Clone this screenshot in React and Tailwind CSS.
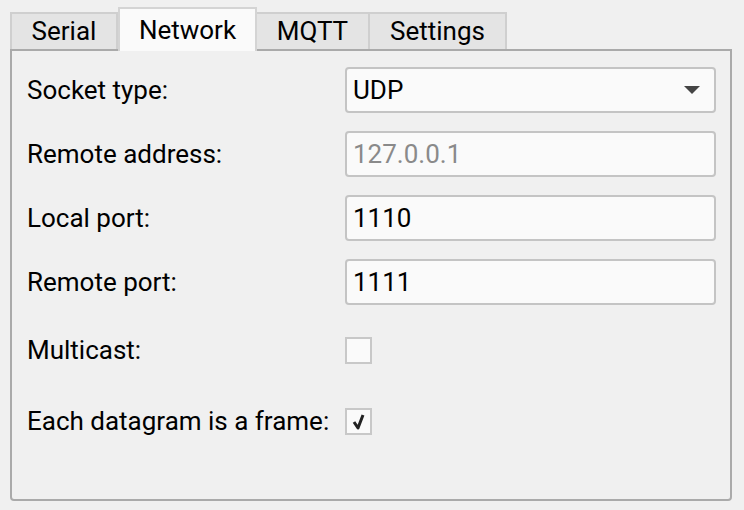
import React from 'react';

const tabs = ['Serial', 'Network', 'MQTT', 'Settings'];
const widths = ['w-[108px]', 'w-[139px]', 'w-[113px]', 'w-[137px]'];

function Field({ value, disabled }) {
  return (
    <div className={`h-[46px] w-[371px] rounded-[4px] border-2 border-[#c4c4c4] bg-[#fafafa] px-[6px] flex items-center text-[26px] ${disabled ? 'text-[#8a8a8a]' : 'text-black'}`}>
      {value}
    </div>
  );
}

function Check({ checked }) {
  return (
    <div className="w-[27px] h-[27px] border-2 border-[#c8c8c8] bg-[#fafafa] flex items-center justify-center">
      {checked && (
        <svg width="14" height="18" viewBox="0 0 14 18">
          <path d="M2 10 L6 16 L11 3" fill="none" stroke="#222" strokeWidth="3" strokeLinejoin="round" />
        </svg>
      )}
    </div>
  );
}

export default function App() {
  const rows = [
    { label: 'Socket type:', h: 'h-[64px]', el: (
      <div className="h-[46px] w-[371px] rounded-[4px] border-2 border-[#c4c4c4] bg-[#fafafa] px-[6px] flex items-center justify-between text-[26px] text-black">
        <span>UDP</span>
        <svg width="16" height="10" viewBox="0 0 16 10" className="mr-[8px]"><path d="M0 1 L16 1 L8 9 Z" fill="#444" /></svg>
      </div>
    ) },
    { label: 'Remote address:', h: 'h-[64px]', el: <Field value="127.0.0.1" disabled /> },
    { label: 'Local port:', h: 'h-[64px]', el: <Field value="1110" /> },
    { label: 'Remote port:', h: 'h-[64px]', el: <Field value="1111" /> },
    { label: 'Multicast:', h: 'h-[72px]', el: <Check /> },
    { label: 'Each datagram is a frame:', h: 'h-[70px]', el: <Check checked /> },
  ];

  return (
    <div className="w-[744px] h-[510px] bg-[#f0f0f0] pt-[7px] px-[10px]" style={{ fontFamily: 'Roboto, sans-serif' }}>
      <div className="flex items-end h-[42px]">
        {tabs.map((t, i) => (
          <div
            key={t}
            className={`${widths[i]} flex items-center justify-center text-[26px] text-black border-2 border-b-0 ${
              i === 1
                ? 'h-[44px] bg-[#fafafa] border-[#d4d4d4] -mb-[2px] relative z-10'
                : 'h-[37px] bg-[#e4e4e4] border-[#cfcfcf] border-l-0'
            } ${i === 0 ? 'border-l-2' : ''}`}
          >
            {t}
          </div>
        ))}
      </div>
      <div className="w-[722px] h-[452px] border-2 border-[#aaaaaa] rounded-b-[4px] bg-[#f0f0f0] pt-[7px] pl-[15px]">
        {rows.map((r) => (
          <div key={r.label} className={`flex items-center ${r.h}`}>
            <div className="w-[318px] text-[26px] text-black">{r.label}</div>
            {r.el}
          </div>
        ))}
      </div>
    </div>
  );
}
